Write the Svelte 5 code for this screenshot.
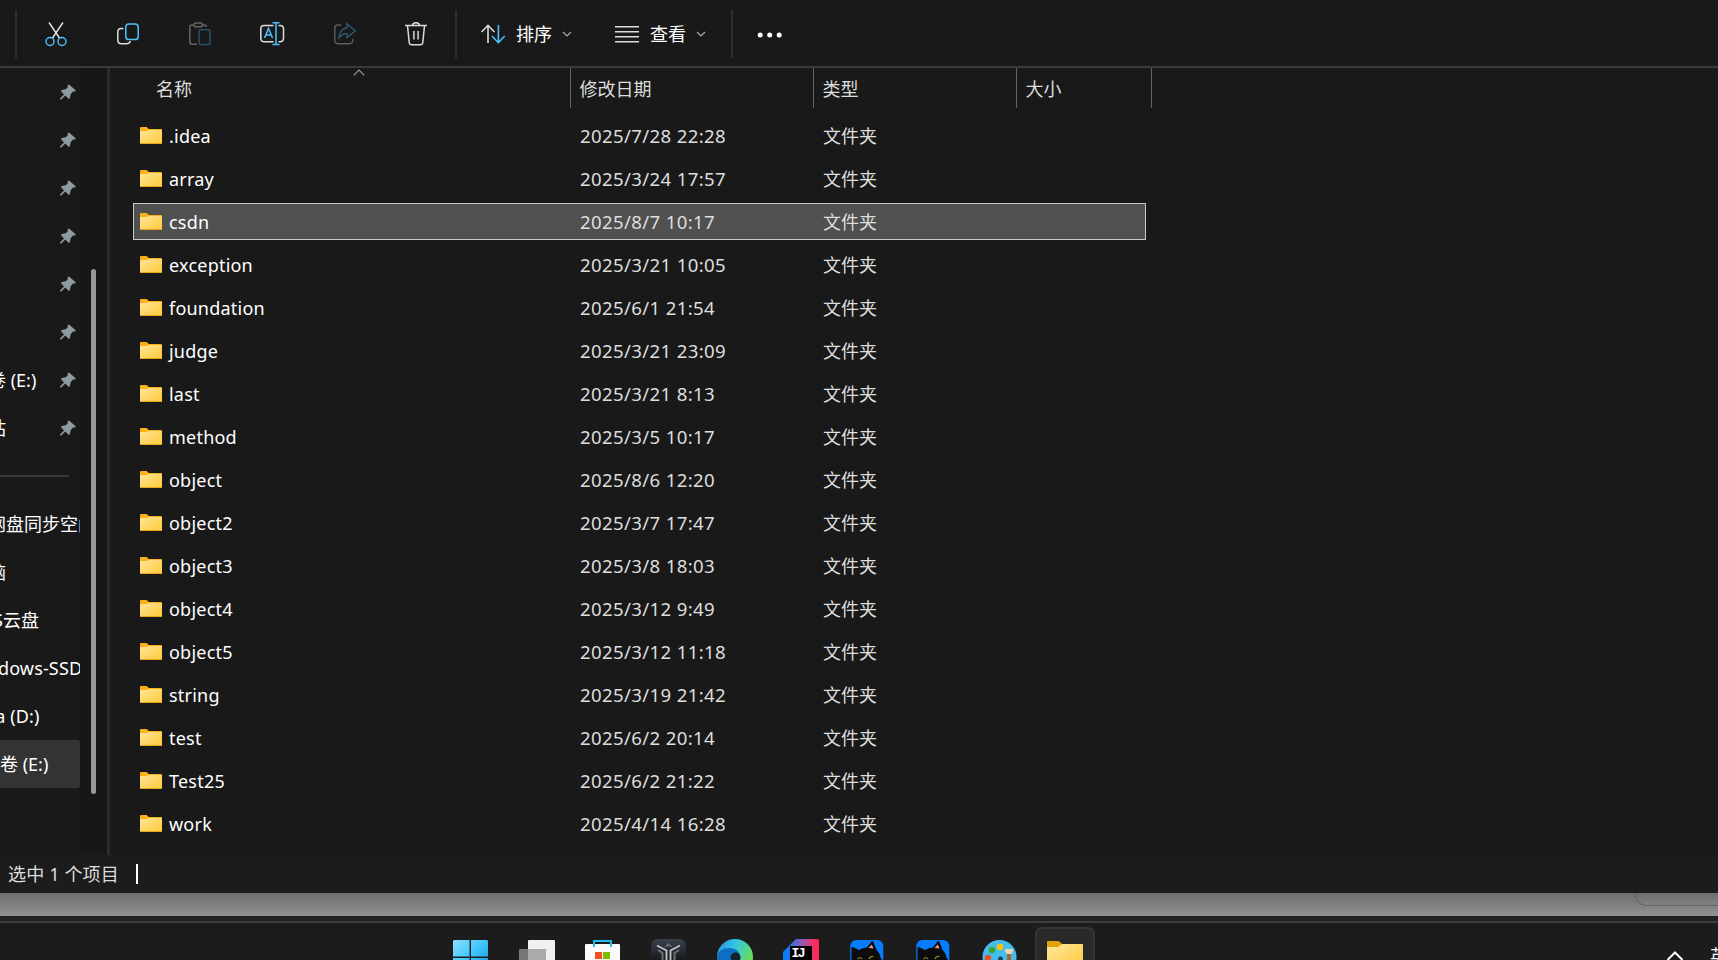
<script lang="ts">
  interface Folder {
    name: string
    modified: string
  }
  interface Place {
    label: string
    pinned?: boolean
    nested?: boolean
    shifted?: boolean
    active?: boolean
  }

  const folders: Folder[] = [
    { name: '.idea', modified: '2025/7/28 22:28' },
    { name: 'array', modified: '2025/3/24 17:57' },
    { name: 'csdn', modified: '2025/8/7 10:17' },
    { name: 'exception', modified: '2025/3/21 10:05' },
    { name: 'foundation', modified: '2025/6/1 21:54' },
    { name: 'judge', modified: '2025/3/21 23:09' },
    { name: 'last', modified: '2025/3/21 8:13' },
    { name: 'method', modified: '2025/3/5 10:17' },
    { name: 'object', modified: '2025/8/6 12:20' },
    { name: 'object2', modified: '2025/3/7 17:47' },
    { name: 'object3', modified: '2025/3/8 18:03' },
    { name: 'object4', modified: '2025/3/12 9:49' },
    { name: 'object5', modified: '2025/3/12 11:18' },
    { name: 'string', modified: '2025/3/19 21:42' },
    { name: 'test', modified: '2025/6/2 20:14' },
    { name: 'Test25', modified: '2025/6/2 21:22' },
    { name: 'work', modified: '2025/4/14 16:28' },
  ]

  const quick: Place[] = [
    { label: '', pinned: true },
    { label: '', pinned: true },
    { label: '', pinned: true },
    { label: '', pinned: true },
    { label: '', pinned: true },
    { label: '', pinned: true },
    { label: '新加卷 (E:)', pinned: true },
    { label: '回收站', pinned: true },
  ]

  const places: Place[] = [
    { label: '百度网盘同步空间' },
    { label: '此电脑' },
    { label: 'WPS云盘', nested: true, shifted: true },
    { label: 'Windows-SSD', nested: true, shifted: true },
    { label: 'Data (D:)', nested: true, shifted: true },
    { label: '新加卷 (E:)', nested: true, active: true },
  ]

  let selected = $state('csdn')
</script>

{#snippet place(p: Place)}
  <div class="place" class:active={p.active}>
    <span class="place-label" class:nested={p.nested} class:shifted={p.shifted}>{p.label}</span>
    {#if p.pinned}
      <svg class="pin" width="16" height="16" viewBox="0 0 16 16">
        <path d="M9 .4 15.7 6.2 15 7.4 13 7.6 10.6 10.2 9.9 14.2 8.8 15 5.3 11.6 1.3 15.6H0V14.5L4 10.4 1 7.1 1.6 6 5.8 5.3 7.7 3.2 7.6 1.2Z" fill="#8f9ba3" />
      </svg>
    {/if}
  </div>
{/snippet}

{#snippet chevron()}
  <svg class="chev" width="10" height="6" viewBox="0 0 10 6" fill="none" stroke="#aaa" stroke-width="1.2"><path d="M1 1l4 4 4-4" /></svg>
{/snippet}

{#snippet cat()}
  <svg width="36" height="36" viewBox="0 0 36 36">
    <rect x="1.300" y="1" width="33" height="34" rx="6" fill="#077cff" />
    <path d="M2.500 8.500Q3.500 7.500 5 8.500L10 11Q15 8 18 8.500L22.500 2.500Q23.500 1.500 24.500 3L27.500 11Q31 14 31.500 19L34.300 22V36H3Q1 28 2.500 20Z" fill="#0c0c0c" />
    <path d="M19.500 9 22.800 5.500 24.500 9.500Z" fill="#f58fa8" />
    <path d="M8.500 20Q11 17.500 13 20M20 20Q21 17 24.500 17.500" fill="none" stroke="#8d8a1c" stroke-width="1.200" />
  </svg>
{/snippet}

<div class="desktop">
  <div class="toolbar">
    <span class="rule first"></span>
    <button class="tool" aria-label="剪切">
      <svg width="24" height="26" viewBox="0 0 24 26" fill="none" stroke-width="1.4">
        <path d="M5 1.500 15.5 17M19 1.500 8.5 17" stroke="#e4e4e4" />
        <circle cx="6" cy="20.500" r="4" stroke="#4cc2ff" />
        <circle cx="18" cy="20.500" r="4" stroke="#4cc2ff" />
      </svg>
    </button>
    <button class="tool" aria-label="复制">
      <svg width="24" height="26" viewBox="0 0 24 26" fill="none" stroke-width="1.5">
        <path d="M7.5 7.5H5.2Q1.8 7.5 1.8 11V19Q1.8 22.8 5.5 22.8H10.5Q14 22.8 14.2 20" stroke="#ddd" />
        <rect x="9.8" y="3" width="12.4" height="15.6" rx="3.2" stroke="#4cc2ff" />
      </svg>
    </button>
    <button class="tool" aria-label="粘贴">
      <svg width="24" height="26" viewBox="0 0 24 26" fill="none" stroke-width="1.5">
        <path d="M9 23.2H3.8Q1.8 23.2 1.8 21V6Q1.8 4 3.8 4H5.5M14.5 4H16.5Q18.5 4 18.5 6" stroke="#656565" />
        <rect x="6" y="2" width="8.5" height="3.8" rx="1.9" stroke="#656565" />
        <rect x="11" y="8.8" width="11" height="14.8" rx="2" stroke="#2a5268" />
      </svg>
    </button>
    <button class="tool" aria-label="重命名">
      <svg width="26" height="26" viewBox="0 0 26 26" fill="none" stroke-width="1.5">
        <path d="M14.5 4.5H5Q1.8 4.5 1.8 8V17Q1.8 20.7 5 20.7H14.5M19.5 4.5H21Q24.5 4.5 24.5 8V17Q24.5 20.7 21 20.7H19.5" stroke="#ddd" />
        <path d="M5.5 17 9.5 7.5 13.5 17M7 14H12M17 2V23.5M13.5 1.8H20.5M13.5 23.6H20.5" stroke="#4cc2ff" />
      </svg>
    </button>
    <button class="tool" aria-label="共享">
      <svg class="share" width="24" height="26" viewBox="0 0 24 26" fill="none" stroke-width="1.4">
        <path d="M8 4H5Q1.8 4 1.8 7.5V19Q1.8 22.7 5 22.7H16Q19.8 22.7 19.8 19V17.8" stroke="#5c5c5c" />
        <path d="M14 2.7 22.2 10 14 16.5V12.8Q9.5 12 6 17Q6.8 7.5 14 6.7Z" stroke="#2d586f" />
      </svg>
    </button>
    <button class="tool" aria-label="删除">
      <svg width="24" height="26" viewBox="0 0 24 26" fill="none" stroke="#ddd" stroke-width="1.5">
        <path d="M1 4.5H23M8.8 4Q9 1.8 12 1.8T15.2 4M3.5 4.5 5.2 21.5Q5.5 23.7 7.5 23.7H16.5Q18.5 23.7 18.8 21.5L20.5 4.5M9.9 10V18.5M14.1 10V18.5" />
      </svg>
    </button>
    <span class="rule"></span>
    <button class="menu sort">
      <svg width="24" height="20" viewBox="0 0 24 20" fill="none" stroke-width="1.6">
        <path d="M.6 8 7 1.3 13.4 8M7 1.5V19" stroke="#ddd" />
        <path d="M11 12 17.4 18.7 23.7 12M17.4 18.5V1" stroke="#4cc2ff" />
      </svg>
      <span>排序</span>
      {@render chevron()}
    </button>
    <button class="menu view">
      <svg width="24" height="18" viewBox="0 0 24 18" stroke="#ddd" stroke-width="1.4"><path d="M0 1.7H24M0 6.7H24M0 11.7H24M0 16.7H24" /></svg>
      <span>查看</span>
      {@render chevron()}
    </button>
    <span class="rule"></span>
    <button class="more" aria-label="更多">
      <svg width="26" height="6" viewBox="0 0 26 6" fill="#fff"><circle cx="3.2" cy="3" r="2.5" /><circle cx="12.7" cy="3" r="2.5" /><circle cx="22.2" cy="3" r="2.5" /></svg>
    </button>
  </div>

  <div class="body">
    <nav class="sidebar">
      {#each quick as p}
        {@render place(p)}
      {/each}
      <div class="split"><span></span></div>
      {#each places as p}
        {@render place(p)}
      {/each}
    </nav>
    <div class="gutter"><span class="thumb"></span></div>

    <main class="files">
      <div class="head">
        <div class="th name">
          名称
          <svg class="asc" width="12" height="7" viewBox="0 0 12 7" fill="none" stroke="#999" stroke-width="1.1"><path d="M.7 6.3 6 1l5.3 5.3" /></svg>
        </div>
        <div class="th">修改日期</div>
        <div class="th">类型</div>
        <div class="th">大小</div>
      </div>
      <div class="rows">
        {#each folders as f (f.name)}
          <!-- svelte-ignore a11y_click_events_have_key_events, a11y_no_static_element_interactions -->
          <div class="row" class:selected={f.name === selected} onclick={() => (selected = f.name)}>
            <span class="cell file">
              <svg width="22" height="18" viewBox="0 0 22 18">
                <defs>
                  <linearGradient id="fold" x1="0" y1="0" x2="1" y2="1">
                    <stop offset="0" stop-color="#ffe69b" />
                    <stop offset="1" stop-color="#ffc937" />
                  </linearGradient>
                </defs>
                <path d="M0 1Q0 0 1 0H6.6L8.8 2H21Q22 2 22 3V8H0Z" fill="#fbb116" />
                <path d="M0 5Q0 4 1 4H6.5L8.5 3H21Q22 3 22 4V16Q22 17 21 17H1Q0 17 0 16Z" fill="url(#fold)" />
                <path d="M.3 16.5H21.7" stroke="#eba71c" />
              </svg>
              {f.name}
            </span>
            <span class="cell date">{f.modified}</span>
            <span class="cell kind">文件夹</span>
          </div>
        {/each}
      </div>
    </main>
  </div>

  <div class="status"><span>选中 1 个项目</span><i class="caret"></i></div>
  <div class="behind"><span class="corner"></span></div>

  <div class="taskbar">
    <div class="slot">
      <svg width="36" height="36" viewBox="1 0 36 36">
        <defs>
          <linearGradient id="win" x1="0" y1="0" x2="1" y2="1">
            <stop offset="0" stop-color="#8be0ff" />
            <stop offset=".5" stop-color="#3cc4fb" />
            <stop offset="1" stop-color="#0a8be0" />
          </linearGradient>
        </defs>
        <path d="M2 1H17.6V17.6H1V2ZM19 1H35L36 2V17.6H19ZM1 19H17.6V35H1ZM19 19H36V35H19Z" fill="url(#win)" />
      </svg>
    </div>
    <div class="slot">
      <svg width="36" height="36" viewBox="1 0 36 36">
        <rect x="10" y="1" width="27" height="27" rx="1" fill="#f1f1f1" />
        <rect x="1" y="10" width="27" height="27" rx="1" fill="#777" />
        <path d="M10 10H28V28H10Z" fill="#aaa" />
      </svg>
    </div>
    <div class="slot">
      <svg width="36" height="36" viewBox="1 0 36 36">
        <path d="M1 6Q1 5 2 5H35Q36 5 36 6V36H1Z" fill="#fafafa" />
        <path d="M10 8V2H27V8" fill="none" stroke="#20bdf2" stroke-width="2" />
        <path d="M11 13H18V20H11Z" fill="#f25022" /><path d="M19 13H26V20H19Z" fill="#7fba00" />
      </svg>
    </div>
    <div class="slot">
      <svg width="36" height="36" viewBox="1 0 36 36">
        <defs>
          <linearGradient id="dark" x1="0" y1="0" x2="0" y2="1">
            <stop offset="0" stop-color="#3a414c" />
            <stop offset=".6" stop-color="#17191d" />
          </linearGradient>
        </defs>
        <rect x="1" y="0" width="35" height="36" rx="7" fill="url(#dark)" />
        <path d="M7 6.500 16.500 11.500V30M30 6.500 20.500 11.500V30" fill="none" stroke="#c3c6c9" stroke-width="1.800" />
        <path d="M8 11 12.500 14V28M29 11 24.500 14V28" fill="none" stroke="#6d7176" stroke-width="2" />
        <path d="M14 8.500 18.5 4 23 8.500 18.5 7Z" fill="#6e747b" />
      </svg>
    </div>
    <div class="slot">
      <svg width="36" height="36" viewBox="0 0 36 36">
        <defs>
          <linearGradient id="edge" x1="0" y1="0" x2="1" y2=".5">
            <stop offset="0" stop-color="#2389dd" />
            <stop offset=".45" stop-color="#35c3ea" />
            <stop offset="1" stop-color="#6be052" />
          </linearGradient>
        </defs>
        <circle cx="18" cy="18" r="18" fill="url(#edge)" />
        <path d="M0 18Q2 9 12 9 21 9 23 16L17 30 5 31Q0 26 0 18Z" fill="#0c6fc4" />
        <circle cx="18.5" cy="18.5" r="5" fill="#14202e" />
      </svg>
    </div>
    <div class="slot">
      <svg width="36" height="36" viewBox="0 0 36 36">
        <defs>
          <linearGradient id="ij" x1="0" y1="0" x2="1" y2="0">
            <stop offset=".1" stop-color="#087cfa" />
            <stop offset=".55" stop-color="#9a58ae" />
            <stop offset=".9" stop-color="#fe2857" />
          </linearGradient>
        </defs>
        <path d="M0 13 13 0H34Q36 0 36 2V36H0Z" fill="url(#ij)" />
        <path d="M7 7H29V29H7Z" fill="#000" />
        <text x="8.500" y="18" class="ij">IJ</text>
      </svg>
    </div>
    <div class="slot">{@render cat()}</div>
    <div class="slot">{@render cat()}</div>
    <div class="slot">
      <svg width="36" height="36" viewBox="0 0 36 36">
        <ellipse cx="18.5" cy="18" rx="17" ry="17" fill="#43bdeb" />
        <circle cx="19" cy="8" r="3.2" fill="#ffc10e" />
        <circle cx="11" cy="11" r="3.2" fill="#3aa52c" />
        <circle cx="7" cy="19" r="3.2" fill="#e2532b" />
        <circle cx="19.5" cy="20" r="2.4" fill="#1e3c50" />
        <path d="M24 10H32Q32.500 14 29.500 15H26.500Q23.500 14 24 10Z" fill="#f3d3ac" />
        <path d="M26 15H30V30H26Z" fill="#a9622b" />
      </svg>
    </div>
    <div class="slot open">
      <svg width="36" height="36" viewBox="0 0 36 36">
        <path d="M0 3Q0 2 1 2H11Q12 2 13 3L15 5H35Q36 5 36 6V12H0Z" fill="#e3a008" />
        <path d="M0 9Q0 8 1 8H11L15 5H35Q36 5 36 6V32H0Z" fill="url(#fold)" />
      </svg>
    </div>
    <div class="tray">
      <svg width="18" height="12" viewBox="0 0 18 12" fill="none" stroke="#fff" stroke-width="2"><path d="M1.500 9 9 1.500 16.500 9" /></svg>
      <span class="ime">英</span>
    </div>
  </div>
</div>

<style>
  :global(body) {
    background: #191919;
    overflow: hidden;
  }
  .desktop {
    display: flex;
    flex-direction: column;
    width: 1718px;
    height: 960px;
    overflow: hidden;
    background: #191919;
    color: #fff;
    font-family: 'Noto Sans', 'Noto Sans CJK SC', sans-serif;
    font-size: 18px;
    line-height: 24px;
  }
  svg {
    display: block;
    flex: none;
  }
  button {
    border: none;
    padding: 0;
    background: transparent;
    color: inherit;
    font: inherit;
  }

  /* toolbar */
  .toolbar {
    display: flex;
    align-items: center;
    box-sizing: border-box;
    height: 68px;
    flex: none;
    border-bottom: 2px solid #3a3a3a;
  }
  .rule {
    width: 2px;
    height: 48px;
    margin-top: 2px;
    background: #2e2e2e;
  }
  .rule.first {
    margin-left: 15px;
    margin-right: 3px;
  }
  .tool {
    display: flex;
    justify-content: center;
    width: 72px;
    margin-top: 2px;
  }
  .share {
    margin-left: 1px;
  }
  .tool + .rule {
    margin-left: 3px;
  }
  .menu {
    display: flex;
    align-items: center;
    margin-top: 2px;
  }
  .menu span {
    margin-left: 11px;
    margin-right: 10px;
  }
  .sort {
    margin-left: 24px;
  }
  .view {
    margin-left: 43px;
    margin-right: 25px;
  }
  .more {
    margin-left: 24px;
    margin-top: 4px;
  }

  /* navigation pane */
  .body {
    display: flex;
    height: 787px;
    flex: none;
  }
  .sidebar {
    width: 80px;
    overflow: hidden;
    background: #191919;
  }
  .place {
    display: flex;
    align-items: center;
    justify-content: space-between;
    box-sizing: border-box;
    height: 48px;
    padding-right: 4px;
    white-space: nowrap;
  }
  .place.active {
    background: #333;
    border-radius: 0 3px 3px 0;
  }
  .place-label {
    margin-left: -48px;
  }
  .place-label.nested {
    margin-left: -36px;
  }
  .place-label.shifted {
    margin-left: -35px;
    letter-spacing: 0.15px;
  }
  .split {
    display: flex;
    align-items: center;
    height: 48px;
  }
  .split span {
    width: 69px;
    height: 2px;
    background: #3a3a3a;
  }
  .gutter {
    box-sizing: border-box;
    width: 30px;
    padding: 201px 0 0 11px;
    background: #171717;
    border-right: 3px solid #2b2b2b;
  }
  .thumb {
    display: block;
    width: 5px;
    height: 525px;
    border-radius: 3px;
    background: #999;
  }

  /* file list */
  .files {
    flex: 1;
  }
  .head {
    display: grid;
    grid-template-columns: 461px 243px 203px 135px;
    height: 40px;
  }
  .th {
    box-sizing: border-box;
    padding: 9px 0 0 8.5px;
    border-right: 1px solid #636363;
    color: #dedede;
  }
  .th.name {
    position: relative;
    padding-left: 46px;
  }
  .asc {
    position: absolute;
    left: 243px;
    top: 1px;
  }
  .rows {
    display: flex;
    flex-direction: column;
    gap: 6px;
    width: 1013px;
    margin: 9px 0 0 23px;
  }
  .row {
    display: grid;
    grid-template-columns: 446px 243px 1fr;
    align-items: center;
    box-sizing: border-box;
    height: 37px;
    border: 1px solid transparent;
  }
  .row.selected {
    background: #505050;
    border-color: #c9c9c9;
  }
  .cell {
    color: #dedede;
  }
  .file {
    display: flex;
    align-items: center;
    gap: 7px;
    padding-left: 6px;
    color: #fff;
    letter-spacing: 0.22px;
  }
  .date {
    font-size: 18.6px;
    letter-spacing: 0.36px;
  }

  /* status bar and the window behind it */
  .status {
    display: flex;
    align-items: center;
    height: 38px;
    flex: none;
    padding-left: 8px;
    background: #1c1c1c;
    color: #dedede;
    letter-spacing: 0.15px;
  }
  .caret {
    width: 2px;
    height: 20px;
    margin-left: 17px;
    background: #fff;
  }
  .behind {
    display: flex;
    justify-content: flex-end;
    height: 23px;
    flex: none;
    background: linear-gradient(#6e6e6e, #929292);
  }
  .corner {
    box-sizing: border-box;
    width: 83px;
    height: 13px;
    border: 1px solid #646464;
    border-width: 0 0 1px 1px;
    border-bottom-left-radius: 12px;
  }

  /* taskbar */
  .taskbar {
    display: flex;
    box-sizing: border-box;
    height: 44px;
    flex: none;
    padding: 5px 0 0 438px;
    background: linear-gradient(#222 5px, #3d3d3d 5px, #3d3d3d 7px, #1c1c1c 7px);
  }
  .slot {
    box-sizing: border-box;
    display: flex;
    justify-content: center;
    width: 60px;
    height: 60px;
    flex: none;
    margin: 6px 3px 0;
    padding-top: 12px;
  }
  .slot.open {
    background: #292929;
    border: 2px solid #353535;
    border-radius: 7px;
    padding-top: 10px;
  }
  .tray {
    display: flex;
    flex: none;
    margin: 30px 0 0 568px;
  }
  .ime {
    margin: -7px 0 0 26px;
    white-space: nowrap;
  }
  .ij {
    font: bold 13px 'Liberation Mono', monospace;
    letter-spacing: -1.5px;
    fill: #fff;
  }
</style>
